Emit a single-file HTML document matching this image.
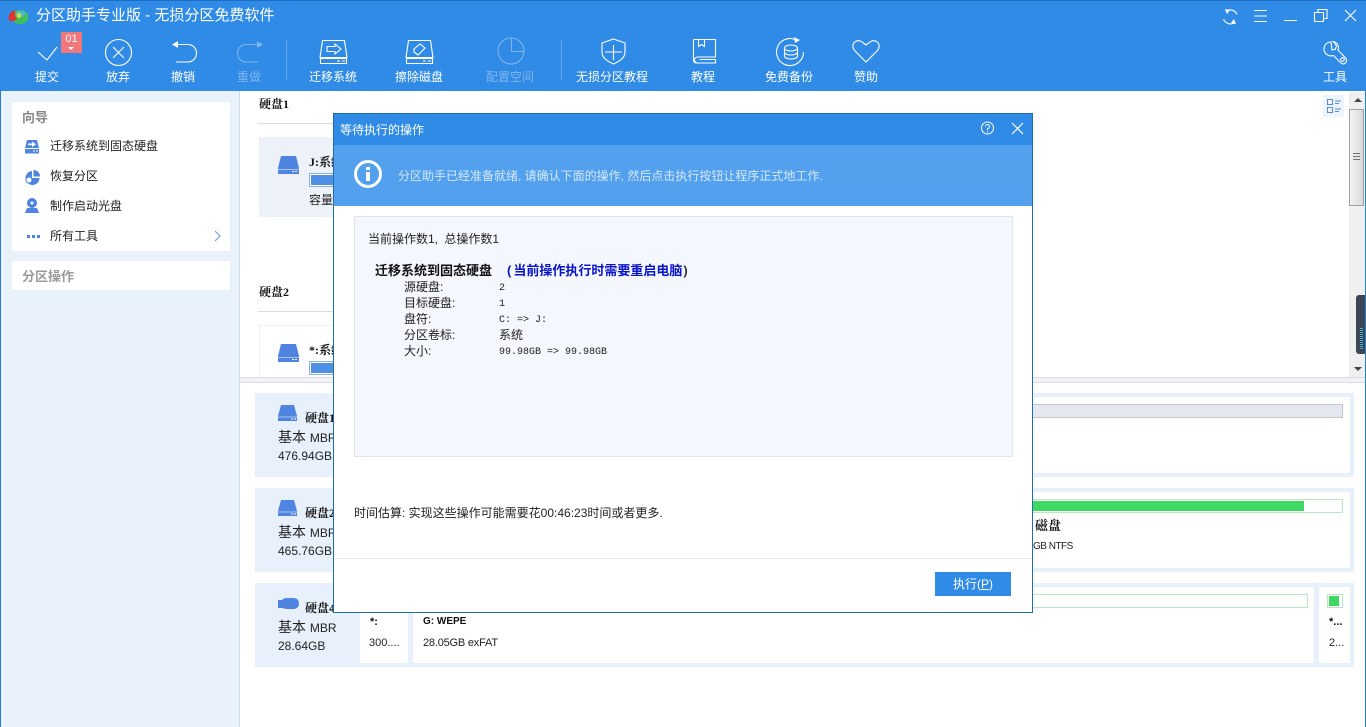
<!DOCTYPE html>
<html lang="zh"><head><meta charset="utf-8"><title>分区助手专业版</title>
<style>
html,body{margin:0;padding:0;background:#fff}
#w{position:relative;width:1366px;height:727px;overflow:hidden;background:#fff;font-family:"Liberation Sans","Noto Sans CJK SC",sans-serif;font-size:12px;color:#222}
#w div,#w svg{position:absolute}
.t{white-space:nowrap;line-height:16px}
.h{color:#fff;text-align:center;font-size:12px}
.b{font-weight:bold;color:#111}
.s{font-family:"Liberation Serif","Noto Serif CJK SC",serif}
.i{fill:none;stroke:#fff;stroke-width:1.1}
.c{background:#e8f0fb}
.p{background:#fff}
.bl{fill:#4f84e0}
.m{font-family:"Liberation Mono","Noto Sans CJK SC",monospace;font-size:10px}
</style></head><body><div id="w">
<div style="left:0;top:0;width:1366px;height:91px;background:#2f8be6"></div>
<div style="left:0;top:0;width:1366px;height:1px;background:#1a6fc4"></div>
<svg style="left:7px;top:7px" width="22" height="18" viewBox="0 0 22 18"><ellipse cx="13" cy="10" rx="8.500" ry="7" fill="#3fbf5c"/><path d="M8 3C2 5 1 10 2 13c3 2 6 1 8-1L8 9z" fill="#e0332b"/><path d="M9 5c3-2 8-1 10 2l-5 3z" fill="#4db4e6"/><circle cx="12" cy="8.500" r="2.500" fill="#c9d94a"/></svg>
<div class="t" style="left:36px;top:6px;color:#fff;font-size:15px;line-height:19px">分区助手专业版 - 无损分区免费软件</div>

<svg class="i" style="left:0;top:0" width="1366" height="91" viewBox="0 0 1366 91">
<path d="M38 52l9 8 10-13"/>
<circle cx="118.500" cy="52.500" r="13"/><path d="M113 47l11 11M124 47l-11 11"/>
<path d="M176 44.500h12a8.500 8.750 0 0 1 0 17.500h-12"/><path d="M172 44.500l6-3.500v7z" fill="#fff" stroke="none"/>
<path d="M258 44.500h-12a8.500 8.750 0 0 0 0 17.500h12" stroke="#7fb5ee"/><path d="M263 44.500l-6-3.500v7z" fill="#7fb5ee" stroke="none"/>
<path d="M286.500 40v40M561.500 40v40" stroke="#5fa5ea"/>
<path d="M322.500 40.500h22l2.500 17h-27zM320.500 58.500h26v5h-26z"/><path d="M327 46.500h8v-2.500l6 5-6 5v-2.500h-8z"/><path d="M337 61h3M342 61h3"/>
<path d="M408.500 40.500h22l2.500 17h-27zM406.500 58.500h26v5h-26z"/><path d="M414 49l6-5 5 4-7 7-4-3z" fill="none"/><path d="M423 61h3M428 61h3"/>
<g stroke="#7fb5ee"><circle cx="511" cy="51" r="13"/><path d="M511.500 38v13.500h13"/></g>
<path d="M613.500 39l11.500 4v9c0 6-5 9-11.500 12-6.500-3-11.500-6-11.500-12v-9z"/><path d="M613.500 45v15M605 52h17"/>
<path d="M693.500 39.500h22v17.500h-18a3 3 0 0 0 0 6h18v-3.500h-16M693.500 39.500v21a3 3 0 0 0 3 2.500"/><path d="M698.500 39.500v7l3-2 3 2v-7"/>
<path d="M803.500 52a13.500 13.500 0 1 1-8-12.300"/><path d="M794 37l6 3-5 3z" fill="#fff" stroke="none"/><ellipse cx="791" cy="48" rx="6.500" ry="3"/><path d="M784.500 48v8c0 4 13 4 13 0v-8M784.500 52c0 4 13 4 13 0"/>
<path d="M866 62l-11-11c-6-7 2-13 7-9l4 3 4-3c5-4 13 2 7 9z"/>
<path d="M1226 11a7.500 7.500 0 0 1 11 3.500M1235 22.500a7.500 7.500 0 0 1-11.500-3.500"/><path d="M1225 9l5 1-3 4zM1236 24l-5-1 3-4z" fill="#fff" stroke="none"/>
<path d="M1254 10.500h13M1254 16h13M1254 21.500h13M1284 20.500h13"/>
<path d="M1314.500 12.500h9v9h-9zM1318 12.500v-3h9v9h-3.500"/>
<path d="M1345 10l11 11M1356 10l-11 11"/>
<path d="M1331 42c-4 0-7 3-7 7 0 5 5 8 9.500 6.500l7.500 7.500c3 2.500 7-1 5-4.500l-8-8.500c1.500-4-1-8-5-8.500l3.500 4-1 3.500-3.500 1z"/><circle cx="1342.500" cy="59.500" r="1.800"/>
</svg>
<div style="left:61px;top:32px;width:21px;height:21px;background:#f0777a"></div>
<div class="t" style="left:61px;top:31px;width:21px;text-align:center;color:#fff;font-size:11px">01</div>
<div style="left:68px;top:47px;width:0;height:0;border:3px solid transparent;border-top:3px solid #fff"></div>
<div class="t h" style="left:17px;top:69px;width:60px">提交</div>
<div class="t h" style="left:88px;top:69px;width:60px">放弃</div>
<div class="t h" style="left:153px;top:69px;width:60px">撤销</div>
<div class="t h" style="left:219px;top:69px;width:60px;color:#7fb5ee">重做</div>
<div class="t h" style="left:293px;top:69px;width:80px">迁移系统</div>
<div class="t h" style="left:379px;top:69px;width:80px">擦除磁盘</div>
<div class="t h" style="left:470px;top:69px;width:80px;color:#7fb5ee">配置空间</div>
<div class="t h" style="left:562px;top:69px;width:100px">无损分区教程</div>
<div class="t h" style="left:673px;top:69px;width:60px">教程</div>
<div class="t h" style="left:749px;top:69px;width:80px">免费备份</div>
<div class="t h" style="left:836px;top:69px;width:60px">赞助</div>
<div class="t h" style="left:1305px;top:69px;width:60px">工具</div>

<div style="left:0;top:91px;width:239px;height:636px;background:#e9f1fb;border-right:1px solid #cfdcec"></div>
<div style="left:0;top:91px;width:1px;height:636px;background:#2a7cc4"></div>
<div style="left:1365px;top:91px;width:1px;height:636px;background:#2a7cc4"></div>
<div style="left:12px;top:102px;width:218px;height:149px;background:#fff"></div>
<div style="left:12px;top:261px;width:218px;height:29px;background:#fff"></div>
<div class="t" style="left:22px;top:110px;color:#888;font-size:13px;font-weight:bold">向导</div>
<div class="t" style="left:22px;top:269px;color:#999;font-weight:bold;font-size:13px">分区操作</div>
<div class="t" style="left:50px;top:138px">迁移系统到固态硬盘</div>
<div class="t" style="left:50px;top:168px">恢复分区</div>
<div class="t" style="left:50px;top:198px">制作启动光盘</div>
<div class="t" style="left:50px;top:228px">所有工具</div>
<svg style="left:25px;top:140px" width="16" height="100" viewBox="0 0 16 100">
<path class="bl" d="M2 0h10l2 8H0zM0 9h14v4.500H0z"/><path d="M3 3.500h4v-2l4 2.800-4 2.800v-2H3z" fill="#fff"/><path d="M8 11h2M11 11h2" stroke="#fff"/>
<path class="bl" d="M8.500 30a6.500 6.500 0 0 1 6.500 6.500H8.500zM7 31v7h7.500A7 7 0 1 1 7 31z"/><circle cx="4" cy="40" r="3" fill="#fff" stroke="#4f84e0"/>
<circle class="bl" cx="7" cy="63" r="5"/><circle cx="7" cy="63" r="1.500" fill="#fff"/><path class="bl" d="M2 68h10l2 5H0z"/>
<path class="bl" d="M2 95h3v3H2zM7 95h3v3H7zM12 95h3v3h-3z"/></svg>
<svg style="left:213px;top:230px;fill:none;stroke:#6c9be0;stroke-width:1.100" width="10" height="12"><path d="M2 1l5 5-5 5"/></svg>

<div class="t b s" style="left:259px;top:96px">硬盘1</div>
<div style="left:258px;top:123px;width:76px;height:1px;background:#d8dde4"></div>
<div style="left:259px;top:137px;width:75px;height:80px;background:#edf1f8"></div>
<svg style="left:278px;top:156px" width="21" height="18"><path class="bl" d="M3 0h15l3 12v6H0v-6z"/><path d="M0 13.500h21" stroke="#fff" stroke-opacity=".5"/><path d="M14 15.500h2M17 15.500h2" stroke="#fff"/></svg>
<div class="t b s" style="left:309px;top:154px">J:系统</div>
<div style="left:309px;top:173px;width:26px;height:14px;background:#4f8fe6;border:1px solid #8fb0d8;box-shadow:inset 0 0 0 1px #fff;box-sizing:border-box"></div>
<div class="t" style="left:309px;top:192px">容量</div>
<div class="t b s" style="left:259px;top:284px">硬盘2</div>
<div style="left:258px;top:311px;width:76px;height:1px;background:#d8dde4"></div>
<div style="left:259px;top:325px;width:75px;height:52px;background:#fff;border:1px solid #f0f2f5;border-bottom:0"></div>
<svg style="left:278px;top:344px" width="21" height="18"><path class="bl" d="M3 0h15l3 12v6H0v-6z"/><path d="M0 13.500h21" stroke="#fff" stroke-opacity=".5"/><path d="M14 15.500h2M17 15.500h2" stroke="#fff"/></svg>
<div class="t b s" style="left:309px;top:342px">*:系统</div>
<div style="left:309px;top:361px;width:26px;height:14px;background:#4f8fe6;border:1px solid #8fb0d8;box-shadow:inset 0 0 0 1px #fff;box-sizing:border-box"></div>

<div style="left:1323px;top:95px;width:21px;height:22px;background:#eef4fc"></div>
<svg style="left:1327px;top:99px;fill:none;stroke:#5b8bd8" width="14" height="16"><path d="M.5.500h5v5h-5zM.5 8.500h5v5h-5zM8 2h6M8 4.500h4M8 10h6M8 12.500h4"/></svg>
<div style="left:1349px;top:92px;width:16px;height:285px;background:#f0f0f0"></div>
<div style="left:1349px;top:109px;width:15px;height:97px;background:linear-gradient(90deg,#f4f4f4,#d8d8d8);border:1px solid #a0a0a0;box-sizing:border-box"></div>
<div style="left:1353px;top:153px;width:7px;height:9px;background:repeating-linear-gradient(#777 0 1px,transparent 1px 3px)"></div>
<div style="left:1354px;top:98px;border:4px solid transparent;border-bottom:4px solid #444;border-top:0"></div>
<div style="left:1354px;top:367px;border:4px solid transparent;border-top:4px solid #444;border-bottom:0"></div>
<div style="left:1356px;top:295px;width:9px;height:59px;background:#3c4654;border-radius:3px 0 0 3px"></div>
<div style="left:1360px;top:328px;width:3px;height:22px;background:repeating-linear-gradient(#4db6d8 0 1px,#2c3844 1px 2px)"></div>
<div style="left:240px;top:377px;width:1125px;height:6px;background:#f0f2f5;border-top:1px solid #d8dde4;border-bottom:1px solid #d8dde4;box-sizing:border-box"></div>

<div class="c" style="left:255px;top:393px;width:1099px;height:84px"></div>
<div class="c" style="left:255px;top:488px;width:1099px;height:84px"></div>
<div class="c" style="left:255px;top:583px;width:1099px;height:84px"></div>
<div class="p" style="left:900px;top:397px;width:450px;height:76px"></div>
<div class="p" style="left:900px;top:492px;width:450px;height:76px"></div>
<div class="p" style="left:900px;top:587px;width:414px;height:76px"></div>
<div class="p" style="left:1319px;top:587px;width:31px;height:76px"></div>
<div class="p" style="left:360px;top:608px;width:48px;height:55px"></div>
<div class="p" style="left:413px;top:608px;width:500px;height:55px"></div>
<svg style="left:278px;top:405px" width="19" height="16"><path class="bl" d="M3 0h13l3 11v5H0v-5z"/><path d="M0 12h19" stroke="#fff" stroke-opacity=".5"/><path d="M13 14h2M16 14h2" stroke="#fff"/></svg>
<svg style="left:278px;top:500px" width="19" height="16"><path class="bl" d="M3 0h13l3 11v5H0v-5z"/><path d="M0 12h19" stroke="#fff" stroke-opacity=".5"/><path d="M13 14h2M16 14h2" stroke="#fff"/></svg>
<svg style="left:278px;top:598px" width="21" height="12"><rect class="bl" x="0" y="2" width="6" height="8"/><rect class="bl" x="3" y="0" width="18" height="11" rx="5"/></svg>
<div class="t b s" style="left:305px;top:410px">硬盘1</div>
<div class="t b s" style="left:305px;top:505px">硬盘2</div>
<div class="t b s" style="left:305px;top:600px">硬盘4</div>
<div class="t" style="left:278px;top:429px;font-size:14px">基本 <span style="font-size:12px">MBR</span></div>
<div class="t" style="left:278px;top:524px;font-size:14px">基本 <span style="font-size:12px">MBR</span></div>
<div class="t" style="left:278px;top:619px;font-size:14px">基本 <span style="font-size:12px">MBR</span></div>
<div class="t" style="left:278px;top:448px">476.94GB</div>
<div class="t" style="left:278px;top:543px">465.76GB</div>
<div class="t" style="left:278px;top:638px">28.64GB</div>
<div class="t b" style="left:370px;top:614px;font-size:11px">*:</div>
<div class="t" style="left:369px;top:635px;font-size:11px">300....</div>
<div class="t b" style="left:423px;top:614px;font-size:10px">G: WEPE</div>
<div class="t" style="left:423px;top:635px;font-size:11px;letter-spacing:-.2px">28.05GB exFAT</div>
<div style="left:1000px;top:404px;width:343px;height:14px;background:#e4e7f0;border:1px solid #c4c6ca;box-sizing:border-box"></div>
<div style="left:1000px;top:499px;width:343px;height:14px;background:#fff;border:1px solid #bfe3c8;box-sizing:border-box"></div>
<div style="left:1000px;top:501px;width:304px;height:10px;background:#3ed863"></div>
<div style="left:1000px;top:594px;width:308px;height:14px;background:#fff;border:1px solid #bfe3c8;box-sizing:border-box"></div>
<div style="left:1327px;top:594px;width:16px;height:14px;background:#fff;border:1px solid #bfe3c8;box-sizing:border-box"></div>
<div style="left:1329px;top:596px;width:10px;height:10px;background:#3ed863"></div>
<div class="t b s" style="left:1035px;top:518px;font-size:13px">磁盘</div>
<div class="t" style="left:1033px;top:539px;font-size:10px;letter-spacing:-.5px">GB NTFS</div>
<div class="t b" style="left:1329px;top:614px;font-size:11px">*...</div>
<div class="t" style="left:1329px;top:635px;font-size:11px">2...</div>

<div style="left:333px;top:113px;width:700px;height:500px;background:#fff;border:1px solid #1d6fa8;box-sizing:border-box"></div>
<div style="left:334px;top:114px;width:698px;height:31px;background:#2f8be6"></div>
<div style="left:334px;top:145px;width:698px;height:61px;background:#53a0ee"></div>
<div class="t" style="left:340px;top:122px;color:#fff">等待执行的操作</div>
<svg style="left:980px;top:120px;fill:none;stroke:#fff" width="48" height="16"><circle cx="7.500" cy="8" r="6"/><path d="M5.500 6.500a2 2 0 1 1 2 2v1.500M7.500 11v1.200"/><path d="M32 3l11 11M43 3L32 14" stroke-width="1.200"/></svg>
<svg style="left:354px;top:160px" width="28" height="28"><circle cx="14" cy="14" r="12.500" fill="none" stroke="#fff" stroke-width="3"/><rect x="12" y="12" width="4" height="9" fill="#fff"/><rect x="12" y="7" width="4" height="3" fill="#fff"/></svg>
<div class="t" style="left:398px;top:168px;color:#d5e8fb">分区助手已经准备就绪, 请确认下面的操作, 然后点击执行按钮让程序正式地工作.</div>

<div style="left:354px;top:216px;width:659px;height:241px;background:#f4f7fd;border:1px solid #e0e4ea;box-sizing:border-box"></div>
<div class="t" style="left:368px;top:231px;word-spacing:3px">当前操作数1, 总操作数1</div>
<div class="t b" style="left:375px;top:263px;font-size:13px">迁移系统到固态硬盘</div>
<div class="t" style="left:507px;top:263px;color:#0a14c8;font-weight:bold;font-size:13px">(<span style="margin-left:2px">当前操作执行时需要重启电脑</span><span style="margin-left:1px;color:#333">)</span></div>
<div class="t" style="left:404px;top:279px">源硬盘:</div><div class="t m" style="left:499px;top:281px">2</div>
<div class="t" style="left:404px;top:295px">目标硬盘:</div><div class="t m" style="left:499px;top:297px">1</div>
<div class="t" style="left:404px;top:311px">盘符:</div><div class="t m" style="left:499px;top:313px">C: =&gt; J:</div>
<div class="t" style="left:404px;top:327px">分区卷标:</div><div class="t" style="left:499px;top:327px">系统</div>
<div class="t" style="left:404px;top:343px">大小:</div><div class="t m" style="left:499px;top:345px">99.98GB =&gt; 99.98GB</div>
<div class="t" style="left:354px;top:505px">时间估算: 实现这些操作可能需要花00:46:23时间或者更多.</div>
<div style="left:334px;top:558px;width:698px;height:1px;background:#e8e8e8"></div>
<div class="t" style="left:935px;top:572px;width:76px;height:24px;line-height:24px;background:#2f8be6;color:#fff;text-align:center">执行(<u>P</u>)</div>
</div></body></html>
